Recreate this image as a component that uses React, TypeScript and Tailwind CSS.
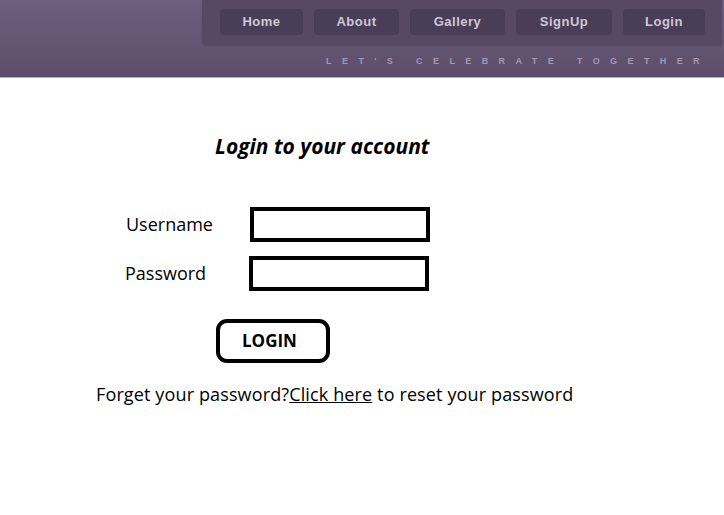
import React from "react";

const navItems = ["Home", "About", "Gallery", "SignUp", "Login"];
const navWidths = ["w-[83px]", "w-[85px]", "w-[95px]", "w-[96px]", "w-[82px]"];

export default function App() {
  return (
    <div className="w-[724px] h-[515px] bg-white overflow-hidden">
      <header className="h-[78px] bg-gradient-to-b from-[#6e5f7f] to-[#5c4d6a] border-b border-[#b9b2bf] flex flex-col">
        <nav className="ml-[202px] mr-[2px] h-[45px] bg-[#574964] rounded-bl-[5px] flex items-start pt-[9px] pl-[18px] gap-[11px] shadow-[0_1px_2px_rgba(0,0,0,0.15)]">
          {navItems.map((n, i) => (
            <div
              key={n}
              className={`${navWidths[i]} h-[26px] rounded-[4px] bg-[#4a3d57] flex items-center justify-center text-[13px] font-bold text-[#d0c8d6] tracking-[0.5px] font-['Liberation_Sans',Arial,sans-serif]`}
            >
              {n}
            </div>
          ))}
        </nav>
        <div className="flex justify-end pr-[14px] mt-[12px] text-[9px] font-bold tracking-[10.4px] text-[#a596b1] font-['Liberation_Sans',Arial,sans-serif] leading-none">
          LET'S CELEBRATE TOGETHER
        </div>
      </header>

      <main className="font-['Open_Sans','Lato',sans-serif] text-black">
        <h1 className="ml-[215px] mt-[54px] text-[21px] font-bold italic leading-[28px]">
          Login to your account
        </h1>

        <div className="mt-[47px] flex flex-col gap-[14px]">
          <div className="flex items-center">
            <label className="ml-[126px] w-[124px] text-[18px]">Username</label>
            <div className="w-[180px] h-[35px] border-[4px] border-black" />
          </div>
          <div className="flex items-center">
            <label className="ml-[125px] w-[124px] text-[18px]">Password</label>
            <div className="w-[180px] h-[35px] border-[4px] border-black" />
          </div>
        </div>

        <button className="ml-[216px] mt-[28px] w-[114px] h-[44px] border-[4px] border-black rounded-[11px] text-[17px] font-bold flex items-center pl-[22px]">
          LOGIN
        </button>

        <p className="ml-[96px] mt-[18px] text-[18px] tracking-[0.13px] leading-[26px]">
          Forget your password?<span className="underline">Click here</span> to reset your password
        </p>
      </main>
    </div>
  );
}
